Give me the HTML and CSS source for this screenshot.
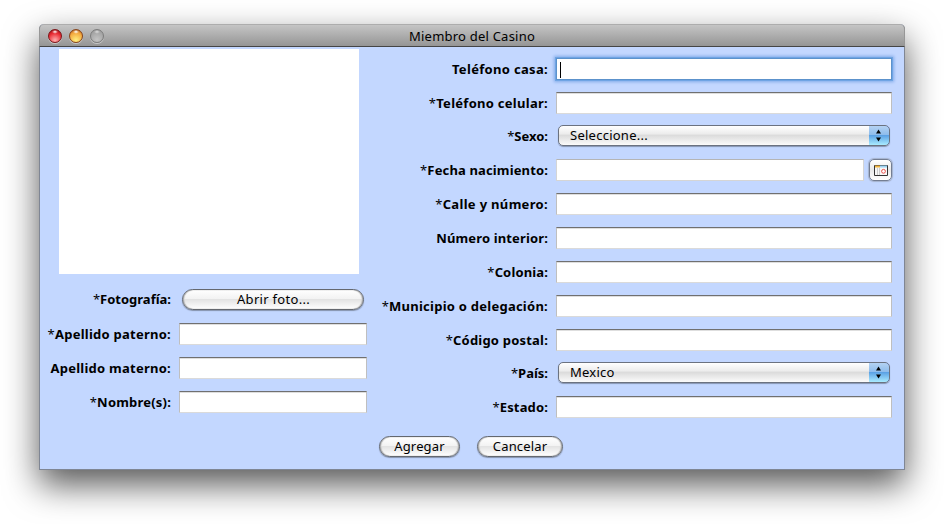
FILE: index.html
```html
<!DOCTYPE html>
<html lang="es">
<head>
<meta charset="utf-8">
<title>Miembro del Casino</title>
<link rel="stylesheet" href="styles.css">
</head>
<body>
<main class="window">
  <header class="titlebar">
    <div class="lights"><i class="light red"></i><i class="light amber"></i><i class="light off"></i></div>
    <h1>Miembro del Casino</h1>
  </header>
  <div class="content">
    <section class="left">
      <div class="photo"></div>
      <div class="row open-row"><label><span class="t1"><i>*</i>Fotografía:</span></label><button class="pill open"><span>Abrir foto...</span></button></div>
      <div class="row"><label><span class="t2"><i>*</i>Apellido paterno:</span></label><div class="field"></div></div>
      <div class="row"><label><span class="t3">Apellido materno:</span></label><div class="field"></div></div>
      <div class="row"><label><span class="t4"><i>*</i>Nombre(s):</span></label><div class="field"></div></div>
    </section>
    <section class="right">
      <div class="row"><label><span class="t5">Teléfono casa:</span></label><div class="field focus"><i class="caret"></i></div></div>
      <div class="row"><label><span class="t6"><i>*</i>Teléfono celular:</span></label><div class="field"></div></div>
      <div class="row short"><label><span class="t7"><i>*</i>Sexo:</span></label><div class="select"><span>Seleccione...</span><div class="arrows"><svg width="7" height="13" viewBox="0 0 7 13"><path d="M3.500 .5 6 4.500H1zM3.500 12.500 6 8.500H1z"/></svg></div></div></div>
      <div class="row"><label><span class="t8"><i>*</i>Fecha nacimiento:</span></label><div class="field date"></div>
        <button class="calendar"><svg width="14" height="11" viewBox="0 0 14 11"><path fill="#f7f7f7" d="M.5.5h13v10H.5z"/><path fill="#eeb33e" d="M1 0h5v2.500H1z"/><path fill="#9bd2f2" d="M6 0h7v2.500H6z"/><path fill="none" stroke="#ccc" d="M3.500 3v7M5.500 3v7"/><path fill="none" stroke="#333" d="M.5.5v10h13V.5"/><path stroke="#333" stroke-opacity=".5" d="M0 .5h14"/><circle cx="9.500" cy="6.300" r="1.900" fill="#fff" stroke="#ec4f4a"/></svg></button></div>
      <div class="row"><label><span class="t9"><i>*</i>Calle y número:</span></label><div class="field"></div></div>
      <div class="row"><label><span class="t10">Número interior:</span></label><div class="field"></div></div>
      <div class="row"><label><span class="t11"><i>*</i>Colonia:</span></label><div class="field"></div></div>
      <div class="row"><label><span class="t12"><i>*</i>Municipio o delegación:</span></label><div class="field"></div></div>
      <div class="row"><label><span class="t13"><i>*</i>Código postal:</span></label><div class="field"></div></div>
      <div class="row short"><label><span class="t14"><i>*</i>País:</span></label><div class="select"><span>Mexico</span><div class="arrows"><svg width="7" height="13" viewBox="0 0 7 13"><path d="M3.500 .5 6 4.500H1zM3.500 12.500 6 8.500H1z"/></svg></div></div></div>
      <div class="row"><label><span class="t15"><i>*</i>Estado:</span></label><div class="field"></div></div>
    </section>
  </div>
  <footer class="actions"><button class="pill add"><span>Agregar</span></button><button class="pill cancel"><span>Cancelar</span></button></footer>
</main>
</body>
</html>
```
FILE: styles.css
```css
* { box-sizing: border-box; }
body { margin: 0; width: 944px; height: 524px; overflow: hidden; background: #fff; padding: 24px 39px; font: 13px/18px "Noto Sans", "Open Sans", sans-serif; color: #000; }
.window { width: 866px; height: 446px; display: flex; flex-direction: column; background: #c3d7ff; border: 1px solid #7f8694; border-top: 0; border-radius: 5px 5px 0 0; box-shadow: 0 15px 34px rgba(0,0,0,.66); }
.titlebar { height: 23px; margin: 0 -1px; flex: none; display: grid; grid-template-columns: 90px 1fr 90px; border: 1px solid #979797; border-top-color: #adadad; border-bottom-color: #454545; border-radius: 5px 5px 0 0; background: linear-gradient(#c5c5c5, #959595); }
.lights { display: flex; gap: 7px; padding: 4px 0 0 8px; }
.light { width: 14px; height: 14px; border-radius: 50%; box-shadow: 0 1px 0 #c8c8c8; }
.red { border: 1px solid #7d1519; background: radial-gradient(ellipse 3px 2px at 50% 15%, #fff, transparent), radial-gradient(circle at 50% 85%, #ffb0b0, #e92c34 60%, #8c080d); }
.amber { border: 1px solid #87441a; background: radial-gradient(ellipse 3px 2px at 50% 15%, #fff, transparent), radial-gradient(circle at 50% 85%, #fff080, #f3a63c 65%, #9a4412); }
.off { border: 1px solid #7d7d7d; background: radial-gradient(ellipse 3px 2px at 50% 15%, #ddd, transparent), radial-gradient(circle at 50% 80%, #c4c4c4, #969696); }
h1 { margin: 0; font-size: 13px; font-weight: 400; line-height: 22px; letter-spacing: .22px; text-align: center; white-space: nowrap; }
.content { display: grid; grid-template-columns: 327px 525px; height: 377px; flex: none; }
.left { padding-top: 2px; }
.photo { width: 300px; height: 225px; margin: 0 0 9px 19px; background: #fff; }
.right { padding-top: 5px; }
.row { height: 34px; display: flex; align-items: center; }
.short { height: 33px; padding-bottom: 2px; }
.open-row { padding-bottom: 2px; }
label { flex: none; width: 131px; margin-right: 8px; font-weight: 700; white-space: nowrap; display: flex; justify-content: flex-end; }
label i { font-style: normal; font-weight: 400; }
.right label { width: 181px; }
.t2, .t3, .t12 { letter-spacing: .25px; }
.t4, .t13 { letter-spacing: .2px; }
.t5, .t9 { letter-spacing: .32px; }
.t6 { letter-spacing: .28px; }
.t8, .t10, .t11, .t15 { letter-spacing: .14px; }
.field { flex: none; width: 188px; height: 22px; background: #fff; border: 1px solid #bfbfbf; border-top-color: #707070; border-bottom-color: #dadada; box-shadow: inset 0 1px 0 #dedede; }
.right .field { width: 336px; }
.right .focus { border-color: #5c92cc; box-shadow: 0 0 0 1px #6fa4e4, 0 0 3px 2px #80abe8; padding: 3px; }
.caret { display: block; width: 1px; height: 16px; background: #000; }
.right .date { width: 308px; border-color: #d5d5d5; border-top-color: #b5b5b5; box-shadow: none; }
button { font: inherit; padding: 0; display: flex; align-items: center; justify-content: center; color: #000; white-space: nowrap; }
.pill { height: 21px; padding-bottom: 2px; letter-spacing: .15px; border: 1px solid #64686f; border-radius: 11px; background: linear-gradient(#fff, #f3f3f3 45%, #e3e3e3 50%, #fff); box-shadow: 0 1px 1px #8693ac, inset 1px 0 1px #aaa, inset -1px 0 1px #aaa; }
.open { width: 182px; margin: 0 0 0 3px; padding: 0 0 0 1px; letter-spacing: .3px; }
.select { width: 332px; height: 21px; margin-left: 2px; padding-left: 11px; display: flex; align-items: center; justify-content: space-between; border: 1px solid #6b7280; border-radius: 5px; overflow: hidden; background: linear-gradient(#fff, #ededed 40%, #dcdcdc 50%, #fbfbfb); box-shadow: 0 1px 1px #8795b2; }
.select span { padding-bottom: 2px; letter-spacing: .25px; }
.arrows { width: 21px; height: 21px; flex: none; margin: -1px; padding: 0 2px 1px 0; display: flex; align-items: center; justify-content: center; border: 1px solid #173f9e; border-left: 0; border-bottom-color: #4a6d92; border-radius: 0 5px 5px 0; background: linear-gradient(#b4d2f3, #8fbdec 45%, #5ca2e5 50%, #a9ebff); }
.calendar { width: 24px; height: 22px; margin-left: 5px; border: 1px solid #747e92; border-radius: 5px; background: linear-gradient(#fff, #e9e9e9 50%, #fff); box-shadow: 0 0 1px 1px #a5b2cd; }
.actions { display: flex; gap: 17px; padding: 12px 0 0 339px; }
.add { width: 81px; }
.cancel { width: 86px; }
```
